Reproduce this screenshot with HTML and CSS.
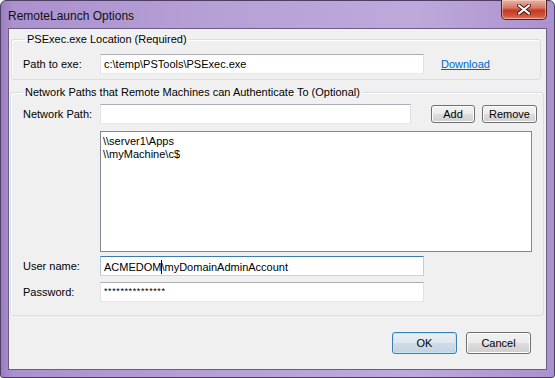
FILE: index.html
```html
<!DOCTYPE html>
<html lang="en">
  <head>
    <meta charset="UTF-8" />
    <title>RemoteLaunch Options</title>
    <link rel="stylesheet" href="styles.css">
  </head>
  <body>
    <div class="window">
      <div class="titlebar">
        <span class="title">RemoteLaunch Options</span>
        <button class="close-btn" aria-label="Close">
          <svg width="14" height="11" viewBox="0 0 14 11">
            <path d="M2 1.5 L12 9.5 M12 1.5 L2 9.5" stroke="#4a1a12" stroke-width="4" stroke-linecap="round" />
            <path d="M2 1.5 L12 9.5 M12 1.5 L2 9.5" stroke="#fff" stroke-width="2.2" stroke-linecap="round" />
          </svg>
        </button>
      </div>

      <div class="client">
        <!-- PSExec location -->
        <fieldset class="group group-exe">
          <legend>PSExec.exe Location (Required)</legend>
          <div class="row">
            <label class="field-label">Path to exe:</label>
            <div class="textbox wide">c:\temp\PSTools\PSExec.exe</div>
            <a href="#" class="link">Download</a>
          </div>
        </fieldset>

        <!-- Network paths -->
        <fieldset class="group group-net">
          <legend>Network Paths that Remote Machines can Authenticate To (Optional)</legend>
          <div class="row row-path">
            <label class="field-label">Network Path:</label>
            <div class="textbox path"></div>
            <button class="btn btn-add">Add</button>
            <button class="btn btn-remove">Remove</button>
          </div>
          <div class="listbox">
            <div>\\server1\Apps</div>
            <div>\\myMachine\c$</div>
          </div>
          <div class="row row-user">
            <label class="field-label">User name:</label>
            <div class="textbox wide focused">ACMEDOM<span class="caret"></span>\myDomainAdminAccount</div>
          </div>
          <div class="row row-pass">
            <label class="field-label">Password:</label>
            <div class="textbox wide password">***************</div>
          </div>
        </fieldset>

        <div class="actions">
          <button class="btn btn-ok">OK</button>
          <button class="btn btn-cancel">Cancel</button>
        </div>
      </div>
    </div>
  </body>
</html>
```

FILE: styles.css
```css
* {
  margin: 0;
  padding: 0;
  box-sizing: border-box;
}

body {
  width: 555px;
  height: 378px;
  overflow: hidden;
  font-family: "Liberation Sans", Arial, sans-serif;
  font-size: 11px;
  color: #000;
}

/* Window frame */
.window {
  width: 555px;
  height: 378px;
  display: flex;
  flex-direction: column;
  padding: 0 7px 7px 7px;
  border: 1px solid #4d3f63;
  border-radius: 6px 6px 3px 3px;
  background: linear-gradient(to right, #9a7dbf 0, #ab91ce 12px, #b6a1d6 40%, #bda9da 75%, #ab91cd 100%);
}

.titlebar {
  height: 27px;
  display: flex;
  align-items: flex-start;
}

.title {
  font-size: 12px;
  line-height: 14px;
  margin-top: 8px;
  color: #111;
}

.close-btn {
  margin-left: auto;
  margin-top: -1px;
  width: 46px;
  height: 20px;
  border: 1px solid #4a2520;
  border-top: none;
  border-radius: 0 0 5px 5px;
  background: linear-gradient(to bottom, #e8b4a8 0, #d57a66 40%, #c43a22 55%, #d2553a 85%, #e0866a 100%);
  box-shadow: inset 0 0 0 1px rgba(255, 220, 210, 0.5);
  display: flex;
  align-items: center;
  justify-content: center;
}

/* Client area */
.client {
  flex: 1;
  background-color: #f0f0f0;
  border: 1px solid #6c5d82;
  display: flex;
  flex-direction: column;
}

.group {
  border: 1px solid #d5dfe5;
  border-radius: 3px;
  box-shadow: inset 1px 1px 0 #fff;
}

.group legend {
  padding: 0 2px;
  line-height: 14px;
}

.group-exe {
  margin: 3px 5px 0 2px;
  padding: 0 0 5px 11px;
}

.group-exe legend {
  margin-left: 2px;
}

.group-net {
  margin: 5px 2px 0 1px;
  padding: 0 0 13px 12px;
}

.group-net legend {
  margin-left: 0;
}

.row {
  display: flex;
  align-items: center;
}

.group-exe .row {
  margin-top: 8px;
}

.field-label {
  width: 77px;
}

.textbox {
  height: 20px;
  background-color: #fff;
  border: 1px solid;
  border-color: #abadb3 #dbdfe6 #e3e9ef #e2e3ea;
  padding: 3px 3px 0;
  line-height: 13px;
  white-space: nowrap;
}

.textbox.wide {
  width: 324px;
}

.textbox.path {
  width: 311px;
}

.textbox.focused {
  border-color: #3d7bad #b5cfe7 #b7d9ed #a4c9e3;
}

.caret {
  display: inline-block;
  width: 1px;
  height: 14px;
  background-color: #000;
  vertical-align: -3px;
  margin-right: -1px;
}

.link {
  margin-left: 17px;
  color: #0066cc;
  text-decoration: underline;
}

/* Buttons */
.btn {
  font-family: inherit;
  font-size: 11px;
  color: #000;
  border: 1px solid #707070;
  border-radius: 3px;
  background: linear-gradient(to bottom, #f2f2f2 0, #ebebeb 50%, #dddddd 51%, #cfcfcf 100%);
  box-shadow: inset 0 0 0 1px #fcfcfc;
}

.row-path {
  margin-top: 5px;
}

.btn-add {
  width: 44px;
  height: 18px;
  margin-left: 20px;
}

.btn-remove {
  width: 55px;
  height: 18px;
  margin-left: 7px;
}

.listbox {
  width: 432px;
  height: 121px;
  margin: 7px 0 0 77px;
  background-color: #fff;
  border: 1px solid #828790;
  padding: 3px 2px;
  line-height: 13px;
}

.row-user {
  margin-top: 4px;
}

.row-pass {
  margin-top: 6px;
}

.password {
  font-size: 9px;
  letter-spacing: 0.6px;
  padding-top: 2px;
}

/* Dialog buttons */
.actions {
  display: flex;
  justify-content: flex-end;
  gap: 9px;
  padding: 16px 15px 0 0;
}

.btn-ok,
.btn-cancel {
  height: 22px;
  width: 65px;
}

.btn-ok {
  border-color: #3c7fb1;
  background: linear-gradient(to bottom, #eaf0f4 0, #dfe7ee 50%, #cfdce7 51%, #c3d3e0 100%);
  box-shadow: inset 0 0 0 1px #bfe6f9;
}
```
